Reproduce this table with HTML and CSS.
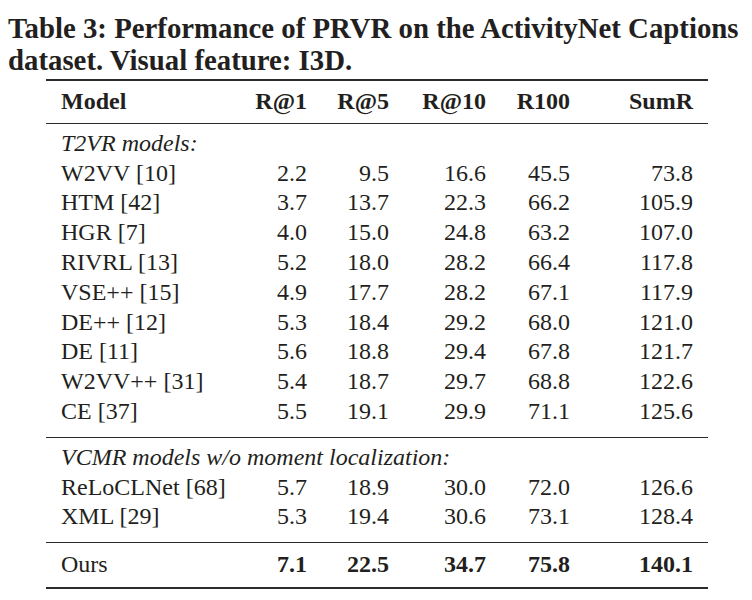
FILE: index.html
```html
<!DOCTYPE html>
<html>
<head>
<meta charset="utf-8">
<link rel="stylesheet" href="styles.css">
</head>
<body>
<div class="page">
  <h1 class="caption">Table 3: Performance of PRVR on the ActivityNet Captions<br>dataset. Visual feature: I3D.</h1>
  <table class="results">
    <colgroup>
      <col class="c-model"><col class="c-r1"><col class="c-r5"><col class="c-r10"><col class="c-r100"><col class="c-sum">
    </colgroup>
    <thead>
      <tr class="head-row">
        <th class="name">Model</th><th>R@1</th><th>R@5</th><th>R@10</th><th>R100</th><th>SumR</th>
      </tr>
    </thead>
    <tbody>
      <tr class="group first"><td colspan="6">T2VR models:</td></tr>
      <tr><td class="name">W2VV [10]</td><td>2.2</td><td>9.5</td><td>16.6</td><td>45.5</td><td>73.8</td></tr>
      <tr><td class="name">HTM [42]</td><td>3.7</td><td>13.7</td><td>22.3</td><td>66.2</td><td>105.9</td></tr>
      <tr><td class="name">HGR [7]</td><td>4.0</td><td>15.0</td><td>24.8</td><td>63.2</td><td>107.0</td></tr>
      <tr><td class="name">RIVRL [13]</td><td>5.2</td><td>18.0</td><td>28.2</td><td>66.4</td><td>117.8</td></tr>
      <tr><td class="name">VSE++ [15]</td><td>4.9</td><td>17.7</td><td>28.2</td><td>67.1</td><td>117.9</td></tr>
      <tr><td class="name">DE++ [12]</td><td>5.3</td><td>18.4</td><td>29.2</td><td>68.0</td><td>121.0</td></tr>
      <tr><td class="name">DE [11]</td><td>5.6</td><td>18.8</td><td>29.4</td><td>67.8</td><td>121.7</td></tr>
      <tr><td class="name">W2VV++ [31]</td><td>5.4</td><td>18.7</td><td>29.7</td><td>68.8</td><td>122.6</td></tr>
      <tr class="last"><td class="name">CE [37]</td><td>5.5</td><td>19.1</td><td>29.9</td><td>71.1</td><td>125.6</td></tr>
    </tbody>
    <tbody>
      <tr class="group first"><td colspan="6">VCMR models w/o moment localization:</td></tr>
      <tr><td class="name">ReLoCLNet [68]</td><td>5.7</td><td>18.9</td><td>30.0</td><td>72.0</td><td>126.6</td></tr>
      <tr class="last"><td class="name">XML [29]</td><td>5.3</td><td>19.4</td><td>30.6</td><td>73.1</td><td>128.4</td></tr>
    </tbody>
    <tbody class="ours">
      <tr class="first final"><td class="name">Ours</td><td><b>7.1</b></td><td><b>22.5</b></td><td><b>34.7</b></td><td><b>75.8</b></td><td><b>140.1</b></td></tr>
    </tbody>
  </table>
</div>
</body>
</html>
```

FILE: styles.css
```css
html, body {
  margin: 0;
  padding: 0;
  background: #ffffff;
}

body {
  font-family: "Liberation Serif", "Times New Roman", serif;
  color: #231f20;
}

.page {
  padding: 12px 8px 0 8px;
}

.caption {
  margin: 0;
  font-size: 28.8px;
  font-weight: bold;
  line-height: 32px;
  color: #231f20;
}

.results {
  margin: 3px 0 0 38px;
  width: 662px;
  table-layout: fixed;
  border-collapse: collapse;
  font-size: 24px;
  line-height: 29.8px;
  border-top: 2px solid #2b2b2b;
  border-bottom: 2px solid #2b2b2b;
}

.c-model { width: 201px; }
.c-r1 { width: 60px; }
.c-r5 { width: 82px; }
.c-r10 { width: 97px; }
.c-r100 { width: 84px; }
.c-sum { width: 138px; }

.results th,
.results td {
  padding: 0;
  text-align: right;
  white-space: nowrap;
}

.results th.name,
.results td.name,
.results .group td {
  text-align: left;
  padding-left: 15px;
}

.results th:last-child,
.results td:last-child {
  padding-right: 15px;
}

.head-row th {
  font-weight: bold;
  padding-top: 6px;
  padding-bottom: 6px;
}

.results thead {
  border-bottom: 1px solid #2b2b2b;
}

.results tbody + tbody {
  border-top: 1px solid #2b2b2b;
}

.results .group td {
  font-style: italic;
}

.results tr.first td {
  padding-top: 5px;
}

.results tr.last td {
  padding-bottom: 10px;
}

.results tr.final td {
  padding-top: 7px;
  padding-bottom: 7px;
}

.results b {
  font-weight: bold;
}
```
